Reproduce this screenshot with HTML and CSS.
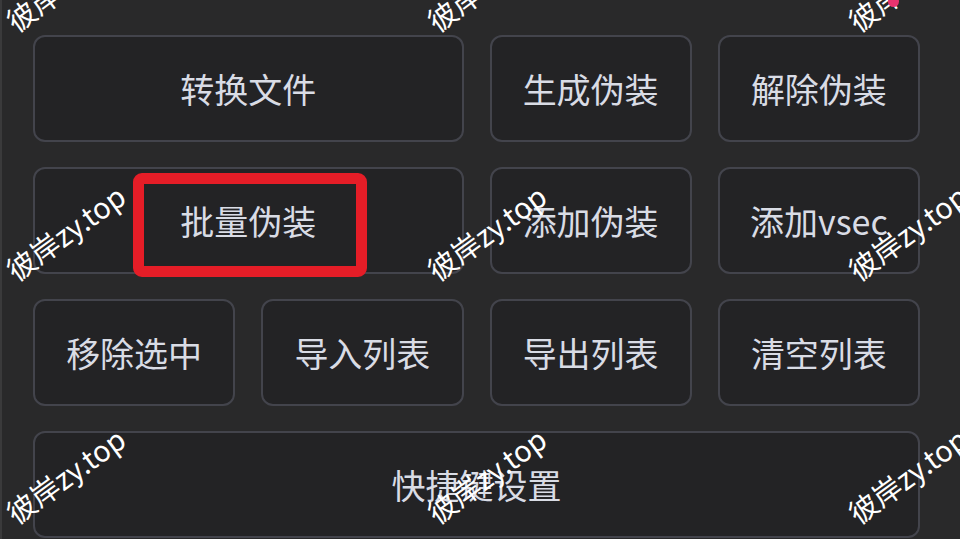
FILE: index.html
```html
<!DOCTYPE html>
<html lang="zh-CN">
<head>
<meta charset="utf-8">
<title>伪装工具</title>
<link rel="stylesheet" href="styles.css">
</head>
<body>
<div class="panel">
  <div class="grid">
    <button class="btn span2">转换文件</button>
    <button class="btn">生成伪装</button>
    <button class="btn">解除伪装</button>
    <button class="btn span2">批量伪装</button>
    <button class="btn">添加伪装</button>
    <button class="btn">添加vsec</button>
    <button class="btn">移除选中</button>
    <button class="btn">导入列表</button>
    <button class="btn">导出列表</button>
    <button class="btn">清空列表</button>
    <button class="btn span4">快捷键设置</button>
  </div>
  <div class="highlight"></div>
  <div class="marks">
    <span class="wm" style="left:63px;top:-17px">彼岸zy.top</span>
    <span class="wm" style="left:484px;top:-17px">彼岸zy.top</span>
    <span class="wm" style="left:905px;top:-17px">彼岸zy.top</span>
    <span class="wm" style="left:63px;top:232px">彼岸zy.top</span>
    <span class="wm" style="left:484px;top:232px">彼岸zy.top</span>
    <span class="wm" style="left:905px;top:232px">彼岸zy.top</span>
    <span class="wm" style="left:63px;top:475px">彼岸zy.top</span>
    <span class="wm" style="left:484px;top:475px">彼岸zy.top</span>
    <span class="wm" style="left:905px;top:475px">彼岸zy.top</span>
    <span class="dot"></span>
  </div>
</div>
</body>
</html>
```

FILE: styles.css
```css
html, body {
  margin: 0;
  padding: 0;
  background: #ffffff;
}
body {
  width: 960px;
  height: 543px;
  overflow: hidden;
  font-family: "Noto Sans CJK SC", "Microsoft YaHei", "Noto Sans", sans-serif;
}
.panel {
  position: relative;
  height: 539px;
  background: #29292a;
  border-left: 2px solid #3a3a3b;
  box-sizing: border-box;
  overflow: hidden;
}
.grid {
  display: grid;
  grid-template-columns: repeat(4, 1fr);
  grid-auto-rows: 107px;
  column-gap: 26px;
  row-gap: 25px;
  width: 887px;
  padding: 35px 0 0 31px;
}
.btn {
  margin: 0;
  background: #232325;
  border: 2px solid #43444c;
  border-radius: 12px;
  color: #d9dce5;
  font-family: "Noto Sans CJK SC", "Microsoft YaHei", sans-serif;
  font-size: 34px;
  font-weight: 400;
  letter-spacing: 0;
  display: flex;
  align-items: center;
  justify-content: center;
  padding: 0;
}
.span2 { grid-column: span 2; }
.span4 { grid-column: span 4; }
.highlight {
  position: absolute;
  left: 131px;
  top: 173px;
  width: 234px;
  height: 104px;
  box-sizing: border-box;
  border: 11px solid #e51d27;
  border-radius: 9px;
}
.marks {
  position: absolute;
  inset: 0;
  pointer-events: none;
}
.wm {
  position: absolute;
  transform: translate(-50%, -50%) rotate(-36deg);
  color: #ffffff;
  font-family: "Noto Sans CJK SC", "Noto Sans", sans-serif;
  font-size: 29px;
  line-height: 1;
  white-space: nowrap;
}
.dot {
  position: absolute;
  left: 886px;
  top: -4px;
  width: 11px;
  height: 11px;
  border-radius: 50%;
  background: #e8336f;
}
```
